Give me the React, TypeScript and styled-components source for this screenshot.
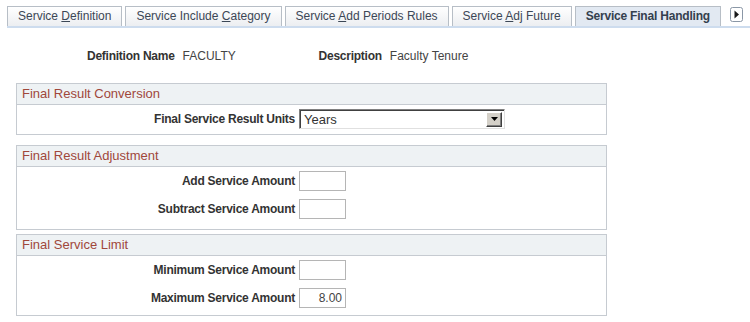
import React from 'react';
import styled, { createGlobalStyle } from 'styled-components';

const Global = createGlobalStyle`
  html, body { margin: 0; padding: 0; background: #fff; }
  body { font-family: Arial, "Liberation Sans", sans-serif; font-size: 12px; color: #333; }
`;

const Page = styled.div`
  width: 750px;
  height: 322px;
  overflow: hidden;
  padding-top: 6px;
  box-sizing: border-box;
`;

const TabBar = styled.div`
  display: flex;
  align-items: flex-end;
  gap: 3px;
  margin-left: 7px;
  height: 20px;
  border-bottom: 2px solid #cddcee;
`;

const Tab = styled.div<{ $active?: boolean }>`
  height: 20px;
  box-sizing: border-box;
  border: 1px solid #b7bec6;
  border-bottom: none;
  padding: 0 10px;
  line-height: 19px;
  white-space: nowrap;
  color: ${(p) => (p.$active ? '#34404e' : '#3c4756')};
  font-weight: ${(p) => (p.$active ? 'bold' : 'normal')};
  letter-spacing: ${(p) => (p.$active ? '-0.2px' : '0')};
  background: ${(p) =>
    p.$active ? '#e2e9f2' : 'linear-gradient(#ffffff, #eceef1)'};
  u { text-decoration: underline; text-underline-offset: 1px; }
`;

const ScrollBtn = styled.div`
  margin-left: 6px;
  align-self: flex-start;
  margin-top: 1px;
  display: flex;
`;

const InfoRow = styled.div`
  display: flex;
  align-items: center;
  height: 14px;
  margin-top: 21px;
  padding-left: 87px;
`;

const InfoLabel = styled.span`
  font-weight: bold;
  letter-spacing: -0.25px;
  color: #333;
  margin-right: 8px;
`;

const InfoValue = styled.span<{ $width?: number }>`
  color: #444;
  width: ${(p) => (p.$width ? `${p.$width}px` : 'auto')};
`;

const Group = styled.section<{ $gap: number }>`
  margin-left: 16px;
  margin-top: ${(p) => p.$gap}px;
  width: 591px;
  box-sizing: border-box;
  border: 1px solid #c6cbd1;
`;

const GroupHeader = styled.div`
  height: 20px;
  line-height: 20px;
  background: #eef2f4;
  border-bottom: 1px solid #c6cbd1;
  padding-left: 5px;
  font-size: 13px;
  color: #a0473b;
`;

const GroupBody = styled.div<{ $pt: number; $pb: number }>`
  display: grid;
  grid-template-columns: 278px auto;
  column-gap: 4px;
  row-gap: 8px;
  align-items: center;
  justify-items: start;
  padding: ${(p) => p.$pt}px 0 ${(p) => p.$pb}px;
`;

const FieldLabel = styled.label`
  justify-self: end;
  font-weight: bold;
  letter-spacing: -0.25px;
  color: #333;
  white-space: nowrap;
`;

const Input = styled.div`
  width: 47px;
  height: 20px;
  box-sizing: border-box;
  border: 1px solid #b5b5b5;
  background: #fff;
  text-align: right;
  padding-right: 3px;
  line-height: 18px;
  color: #444;
`;

const Select = styled.div`
  width: 206px;
  height: 20px;
  box-sizing: border-box;
  border: 1px solid;
  border-color: #808080 #e0e0e0 #e0e0e0 #808080;
  box-shadow: inset 1px 1px 0 #404040;
  display: flex;
  align-items: center;
  justify-content: space-between;
  padding: 0 2px 0 4px;
  color: #333;
  font-size: 13px;
`;

const DropBtn = styled.div`
  width: 16px;
  height: 15px;
  box-sizing: border-box;
  background: #d4d0c8;
  border: 1px solid;
  border-color: #ffffff #404040 #404040 #ffffff;
  box-shadow: inset -1px -1px 0 #808080;
  display: flex;
  align-items: center;
  justify-content: center;
`;

const Arrow = () => (
  <svg width="13" height="15" viewBox="0 0 13 15">
    <rect x="0.5" y="0.5" width="12" height="14" rx="2" fill="#fff" stroke="#8a97a6" />
    <path d="M4.5 3.5 L9 7.5 L4.5 11.5 Z" fill="#1a1a1a" />
  </svg>
);

const Caret = () => (
  <svg width="7" height="4" viewBox="0 0 7 4">
    <path d="M0 0 H7 L3.5 4 Z" fill="#000" />
  </svg>
);

export default function App() {
  return (
    <Page>
      <Global />
      <TabBar>
        <Tab>Service <u>D</u>efinition</Tab>
        <Tab>Service Include <u>C</u>ategory</Tab>
        <Tab>Service <u>A</u>dd Periods Rules</Tab>
        <Tab>Service <u>A</u>dj Future</Tab>
        <Tab $active>Service Final Handling</Tab>
        <ScrollBtn><Arrow /></ScrollBtn>
      </TabBar>

      <InfoRow>
        <InfoLabel>Definition Name</InfoLabel>
        <InfoValue $width={136}>FACULTY</InfoValue>
        <InfoLabel>Description</InfoLabel>
        <InfoValue>Faculty Tenure</InfoValue>
      </InfoRow>

      <Group $gap={20}>
        <GroupHeader>Final Result Conversion</GroupHeader>
        <GroupBody $pt={4} $pb={5}>
          <FieldLabel>Final Service Result Units</FieldLabel>
          <Select>
            <span>Years</span>
            <DropBtn><Caret /></DropBtn>
          </Select>
        </GroupBody>
      </Group>

      <Group $gap={10}>
        <GroupHeader>Final Result Adjustment</GroupHeader>
        <GroupBody $pt={4} $pb={10}>
          <FieldLabel>Add Service Amount</FieldLabel>
          <Input />
          <FieldLabel>Subtract Service Amount</FieldLabel>
          <Input />
        </GroupBody>
      </Group>

      <Group $gap={4}>
        <GroupHeader>Final Service Limit</GroupHeader>
        <GroupBody $pt={4} $pb={7}>
          <FieldLabel>Minimum Service Amount</FieldLabel>
          <Input />
          <FieldLabel>Maximum Service Amount</FieldLabel>
          <Input>8.00</Input>
        </GroupBody>
      </Group>
    </Page>
  );
}
